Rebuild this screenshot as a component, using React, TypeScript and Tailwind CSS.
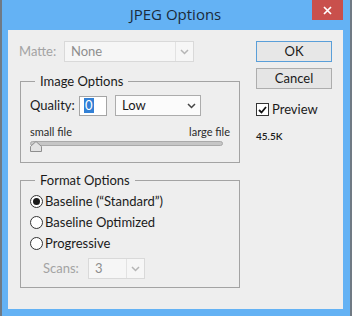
import React from "react";

const Chevron = ({ color }: { color: string }) => (
  <svg width="9" height="6" viewBox="0 0 9 6">
    <path d="M1 1l3.5 3.5L8 1" fill="none" stroke={color} strokeWidth="1.5" />
  </svg>
);

const Select = ({
  value,
  width,
  disabled,
  divider,
}: {
  value: string;
  width: string;
  disabled?: boolean;
  divider?: boolean;
}) => (
  <div
    className={`flex h-[21px] items-center border ${width} ${
      disabled ? "border-[#d9d9d9] bg-[#f6f6f6] text-[#8e8e8e]" : "border-[#acacac] bg-[#fbfbfb] text-[#1a1a1a]"
    }`}
  >
    <span className="flex-1 pl-[6px] leading-[19px]">{value}</span>
    <span
      className={`flex h-full w-[18px] items-center justify-center ${
        divider ? "border-l border-[#e2e2e2]" : ""
      }`}
    >
      <Chevron color={disabled ? "#b5b5b5" : "#444"} />
    </span>
  </div>
);

const Radio = ({ checked, label }: { checked?: boolean; label: string }) => (
  <div className="flex h-[21px] items-center gap-[2px]">
    <span className="flex h-[13px] w-[13px] items-center justify-center rounded-full border border-[#333] bg-white">
      {checked && <span className="h-[7px] w-[7px] rounded-full bg-[#1a1a1a]" />}
    </span>
    <span>{label}</span>
  </div>
);

export default function App() {
  return (
    <div className="flex h-[316px] w-[352px] flex-col border-x-2 border-[#707a84] bg-[#64b2f4] font-['Lato','Open_Sans',sans-serif] text-[13px] text-[#1a1a1a]">
      {/* title bar */}
      <div className="grid h-[30px] grid-cols-[1fr_auto_1fr] pl-[6px] pr-[7px]">
        <div />
        <div className="pt-[4px] font-['Open_Sans',sans-serif] text-[15px] leading-[20px] text-[#1b2a3a]">
          JPEG Options
        </div>
        <div className="flex justify-end">
          <div className="flex h-[20px] w-[31px] items-center justify-center bg-[#c9504c] text-white">
            <svg width="9" height="9" viewBox="0 0 9 9">
              <path d="M1 1l7 7M8 1l-7 7" stroke="#fff" strokeWidth="1.7" />
            </svg>
          </div>
        </div>
      </div>

      {/* content */}
      <div className="ml-[6px] flex h-[279px] w-[335px] bg-[#eeeeee]">
        <div className="flex w-[232px] flex-col pl-[12px] pt-[11px]">
          <div className="flex h-[21px] items-center">
            <span className="-ml-px w-[45px] text-[#a3a3a3]">Matte:</span>
            <Select value="None" width="w-[130px]" disabled divider />
          </div>

          <fieldset className="mt-[10px] w-[220px] border border-[#a3a3a3]">
            <legend className="ml-[14px] px-[5px] leading-[18px]">Image Options</legend>
            <div className="px-[9px] pb-[10px] pt-[5px]">
              <div className="flex h-[21px] items-center">
                <span className="w-[49px]">Quality:</span>
                <div className="flex h-[20px] w-[28px] items-center border border-[#a5a5a5] bg-white pl-[4px]">
                  <span className="bg-[#3381d6] px-px leading-[15px] text-white">0</span>
                </div>
                <div className="ml-[8px]">
                  <Select value="Low" width="w-[86px]" />
                </div>
              </div>
              <div className="mt-[9px] flex justify-between text-[11px] leading-[13px] text-[#2a2a2a]">
                <span>small file</span>
                <span>large file</span>
              </div>
              <div className="relative h-[11px] w-[193px]">
                <div className="mt-[3px] h-[5px] w-full rounded-full border border-[#a9a9a9] bg-[#c6c6c6]" />
                <svg className="absolute left-0 top-0" width="12" height="11" viewBox="0 0 12 11">
                  <path d="M6 0.5L11.5 5.5V10.5H0.5V5.5Z" fill="#e3e3e3" stroke="#8e8e8e" />
                </svg>
              </div>
            </div>
          </fieldset>

          <fieldset className="mt-[8px] w-[220px] border border-[#a3a3a3]">
            <legend className="ml-[14px] px-[5px] leading-[18px]">Format Options</legend>
            <div className="px-[9px] pb-[8px] pt-[2px]">
              <Radio checked label="Baseline (“Standard”)" />
              <Radio label="Baseline Optimized" />
              <Radio label="Progressive" />
              <div className="mt-[4px] flex h-[21px] items-center pl-[13px]">
                <span className="w-[45px] text-[#a3a3a3]">Scans:</span>
                <Select value="3" width="w-[57px]" disabled divider />
              </div>
            </div>
          </fieldset>
        </div>

        <div className="ml-[16px] flex w-[76px] flex-col pt-[11px]">
          <div className="flex h-[21px] items-center justify-center border border-[#5a9fd9] bg-[#e7e7e7]">OK</div>
          <div className="mt-[6px] flex h-[21px] items-center justify-center border border-[#adadad] bg-[#e5e5e5]">
            Cancel
          </div>
          <div className="mt-[14px] flex h-[13px] items-center gap-[3px]">
            <span className="flex h-[13px] w-[13px] items-center justify-center border border-[#333] bg-white">
              <svg width="9" height="8" viewBox="0 0 9 8">
                <path d="M1 4l2.5 2.5L8 1" fill="none" stroke="#111" strokeWidth="1.8" />
              </svg>
            </span>
            <span>Preview</span>
          </div>
          <div className="mt-[13px] text-[10px] font-semibold leading-[14px]">45.5K</div>
        </div>
      </div>
    </div>
  );
}
